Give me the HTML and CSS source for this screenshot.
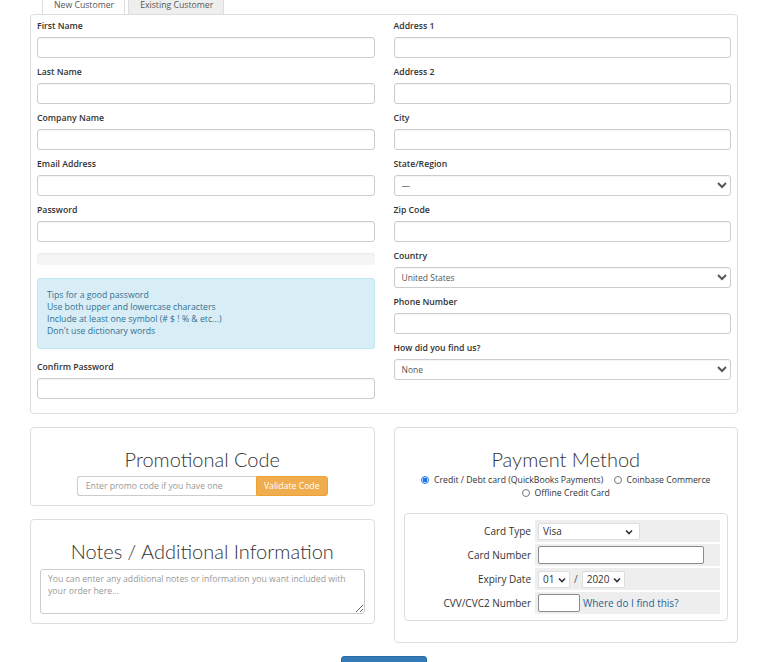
FILE: index.html
```html
<!DOCTYPE html>
<html lang="en">
<head>
<meta charset="utf-8">
<title>Checkout</title>
<link rel="stylesheet" href="styles.css">
</head>
<body>
<div class="page">
  <ul class="tabs">
    <li class="tab active">New Customer</li>
    <li class="tab">Existing Customer</li>
  </ul>
  <div class="panel main">
    <div class="col">
      <div class="field"><label>First Name</label><input class="control" type="text"></div>
      <div class="field"><label>Last Name</label><input class="control" type="text"></div>
      <div class="field"><label>Company Name</label><input class="control" type="text"></div>
      <div class="field"><label>Email Address</label><input class="control" type="text"></div>
      <div class="field"><label>Password</label><input class="control" type="password"></div>
      <div class="strength"></div>
      <div class="alert">
        <div>Tips for a good password</div>
        <div>Use both upper and lowercase characters</div>
        <div>Include at least one symbol (# $ ! % &amp; etc...)</div>
        <div>Don't use dictionary words</div>
      </div>
      <div class="field last"><label>Confirm Password</label><input class="control" type="password"></div>
    </div>
    <div class="col">
      <div class="field"><label>Address 1</label><input class="control" type="text"></div>
      <div class="field"><label>Address 2</label><input class="control" type="text"></div>
      <div class="field"><label>City</label><input class="control" type="text"></div>
      <div class="field"><label>State/Region</label><select class="control"><option>—</option></select></div>
      <div class="field"><label>Zip Code</label><input class="control" type="text"></div>
      <div class="field"><label>Country</label><select class="control"><option>United States</option></select></div>
      <div class="field"><label>Phone Number</label><input class="control" type="text"></div>
      <div class="field last"><label>How did you find us?</label><select class="control"><option>None</option></select></div>
    </div>
  </div>

  <div class="bottom">
    <div class="left">
      <div class="panel box promo">
        <h2>Promotional Code</h2>
        <div class="input-group">
          <input class="promo-input" type="text" placeholder="Enter promo code if you have one">
          <button class="btn-warning" type="button">Validate Code</button>
        </div>
      </div>
      <div class="panel box notes">
        <h2>Notes / Additional Information</h2>
        <textarea class="notes-area" placeholder="You can enter any additional notes or information you want included with your order here..."></textarea>
      </div>
    </div>
    <div class="panel box payment">
      <h2>Payment Method</h2>
      <div class="methods">
        <label class="method"><input type="radio" name="pm" checked>Credit / Debt card (QuickBooks Payments)</label>
        <label class="method"><input type="radio" name="pm">Coinbase Commerce</label>
        <label class="method"><input type="radio" name="pm">Offline Credit Card</label>
      </div>
      <div class="card-box">
        <div class="card-label">Card Type</div>
        <div class="card-cell">
          <span class="sel-wrap"><select class="sel sel-type"><option>Visa</option></select><svg class="chev" width="8" height="6" viewBox="0 0 8 6"><path d="M1 1.5 L4 4.5 L7 1.5" fill="none" stroke="#333" stroke-width="1.6"/></svg></span>
        </div>
        <div class="card-label">Card Number</div>
        <div class="card-cell"><input class="inp inp-number" type="text"></div>
        <div class="card-label">Expiry Date</div>
        <div class="card-cell">
          <span class="sel-wrap"><select class="sel sel-month"><option>01</option></select><svg class="chev" width="8" height="6" viewBox="0 0 8 6"><path d="M1 1.5 L4 4.5 L7 1.5" fill="none" stroke="#333" stroke-width="1.6"/></svg></span>
          <span class="slash">/</span>
          <span class="sel-wrap"><select class="sel sel-year"><option>2020</option></select><svg class="chev" width="8" height="6" viewBox="0 0 8 6"><path d="M1 1.5 L4 4.5 L7 1.5" fill="none" stroke="#333" stroke-width="1.6"/></svg></span>
        </div>
        <div class="card-label">CVV/CVC2 Number</div>
        <div class="card-cell"><input class="inp inp-cvv" type="text"><a class="link" href="#">Where do I find this?</a></div>
      </div>
    </div>
  </div>

  <div class="actions"><button class="btn-primary" type="button">Complete Order</button></div>
</div>
</body>
</html>
```

FILE: styles.css
```css
html { overflow: hidden; }
body {
  margin: 0;
  font-family: "Open Sans", "Liberation Sans", sans-serif;
  font-size: 8.7px;
  color: #333;
  background: #fff;
}
.page { padding: 0 30px; }

.tabs {
  list-style: none;
  margin: -5px 0 0;
  padding: 0 0 0 12px;
  display: flex;
  gap: 3px;
}
.tab {
  padding: 4px 10px 4px 11px;
  line-height: 10px;
  border: 1px solid #ddd;
  border-bottom: 0;
  border-radius: 3px 3px 0 0;
  color: #555;
  background: #eee;
}
.tab.active { background: #fff; }

.panel {
  border: 1px solid #ddd;
  border-radius: 4px;
  background: #fff;
}
.main {
  display: grid;
  grid-template-columns: 1fr 1fr;
  column-gap: 19px;
  padding: 5px 6px 14px;
  align-items: start;
}
.col {
  display: flex;
  flex-direction: column;
}
.field {
  display: flex;
  flex-direction: column;
  gap: 5px;
  margin-bottom: 8px;
}
.field.last { margin-bottom: 0; }
.field label {
  font-weight: 600;
  line-height: 12px;
  color: #333;
}
.control {
  box-sizing: border-box;
  width: 100%;
  height: 21px;
  margin: 0;
  padding: 0 3px;
  border: 1px solid #ccc;
  border-radius: 3px;
  background: #fff;
  font-family: "Open Sans", "Liberation Sans", sans-serif;
  font-size: 8.5px;
  color: #555;
  box-shadow: inset 0 1px 1px rgba(0,0,0,.04);
}
.strength {
  height: 12px;
  margin: 3px 0 13px;
  background: #f5f5f5;
  border-radius: 3px;
  box-shadow: inset 0 1px 2px rgba(0,0,0,.05);
}
.alert {
  padding: 10px 9px 11px;
  margin-bottom: 12px;
  background: #d9edf7;
  border: 1px solid #bce8f1;
  border-radius: 3px;
  color: #31708f;
  line-height: 12px;
}

.bottom {
  display: grid;
  grid-template-columns: 1fr 1fr;
  column-gap: 19px;
  margin-top: 13px;
  align-items: start;
}
.left {
  display: flex;
  flex-direction: column;
  gap: 13px;
}
.box { padding: 20px 9px 9px; }
.box h2 {
  margin: 0 0 6px;
  font-family: "Lato", "Open Sans", sans-serif;
  font-weight: 300;
  font-size: 20px;
  line-height: 22px;
  text-align: center;
  color: #333;
}
.input-group {
  display: flex;
  justify-content: center;
}
.promo-input {
  box-sizing: border-box;
  width: 179px;
  height: 20px;
  margin: 0;
  padding: 0 8px;
  border: 1px solid #ccc;
  border-right: 0;
  border-radius: 3px 0 0 3px;
  font-family: "Open Sans", "Liberation Sans", sans-serif;
  font-size: 8.7px;
  color: #555;
}
.promo-input::placeholder, .notes-area::placeholder { color: #999; }
.btn-warning {
  box-sizing: border-box;
  width: 72px;
  height: 20px;
  margin: 0;
  padding: 0;
  border: 1px solid #eea236;
  border-radius: 0 3px 3px 0;
  background: #f0ad4e;
  color: #fff;
  font-family: "Open Sans", "Liberation Sans", sans-serif;
  font-size: 8.7px;
}
.notes h2 { margin-bottom: 7px; }
.notes-area {
  display: block;
  box-sizing: border-box;
  width: 100%;
  height: 45px;
  margin: 0;
  padding: 3px 7px;
  border: 1px solid #ccc;
  border-radius: 3px;
  font-family: "Open Sans", "Liberation Sans", sans-serif;
  font-size: 8.7px;
  line-height: 12px;
  color: #555;
  resize: vertical;
}

.payment { padding-bottom: 21px; }
.payment h2 { margin-bottom: 4px; }
.methods {
  text-align: center;
  line-height: 12px;
  margin: 0 0 13px;
  color: #333;
}
.method {
  display: inline-flex;
  align-items: center;
  gap: 5px;
  margin: 0 4px;
  white-space: nowrap;
}
.method input {
  appearance: none;
  -webkit-appearance: none;
  box-sizing: border-box;
  width: 8px;
  height: 8px;
  margin: 0;
  border: 1px solid #777;
  border-radius: 50%;
  background: #fff;
}
.method input:checked {
  border-color: #1a73e8;
  background: radial-gradient(circle, #1a73e8 0 2.2px, #fff 2.6px);
}

.card-box {
  border: 1px solid #ddd;
  border-radius: 4px;
  padding: 6px 7px 6px 6px;
  display: grid;
  grid-template-columns: 1fr 185px;
  grid-auto-rows: 22px;
  gap: 2px;
  font-size: 10px;
}
.card-label {
  text-align: right;
  padding-right: 2px;
  line-height: 22px;
  color: #333;
}
.card-cell {
  background: #eee;
  display: flex;
  align-items: center;
  padding-left: 3px;
  gap: 3px;
}
.sel-wrap {
  position: relative;
  display: inline-flex;
}
.sel {
  appearance: none;
  -webkit-appearance: none;
  box-sizing: border-box;
  height: 17px;
  margin: 0;
  padding: 0 12px 0 4px;
  border: 1px solid #ddd;
  border-radius: 2px;
  background: #fff;
  font-family: "Open Sans", "Liberation Sans", sans-serif;
  font-size: 10px;
  color: #333;
}
.chev {
  position: absolute;
  right: 4px;
  top: 6px;
  pointer-events: none;
}
.sel-type { width: 102px; }
.sel-type + .chev { right: 7px; }
.sel-month { width: 32px; }
.sel-year { width: 43px; }
.slash { color: #555; padding: 0 1px; }
.inp {
  box-sizing: border-box;
  height: 18px;
  margin: 0;
  padding: 0 3px;
  border: 1px solid #8a8a8a;
  border-radius: 2px;
  background: #fff;
  font-size: 10px;
}
.inp-number { width: 166px; }
.inp-cvv { width: 42px; }
.link {
  color: #2a6496;
  text-decoration: none;
}

.actions {
  text-align: center;
  margin-top: 13px;
}
.btn-primary {
  width: 86px;
  padding: 10px 0;
  line-height: 14px;
  border: 1px solid #2e6da4;
  border-radius: 3px;
  background: #337ab7;
  color: #fff;
  font-family: "Open Sans", "Liberation Sans", sans-serif;
  font-size: 10px;
}
```
